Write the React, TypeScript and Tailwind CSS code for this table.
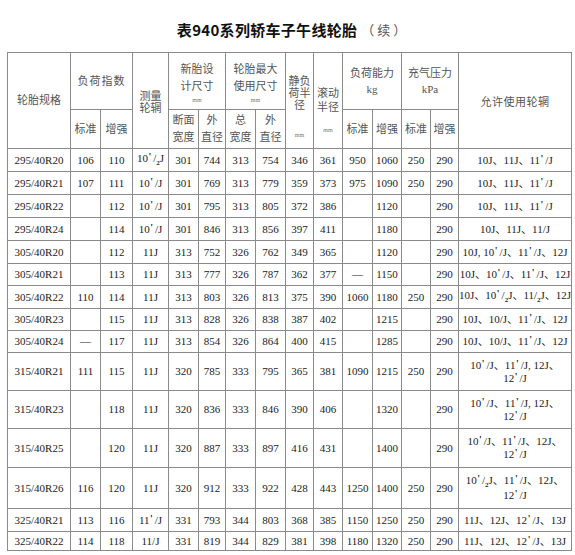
import React from 'react';

const FONT = "font-['Liberation_Serif','Noto_Sans_CJK_SC',serif]";

const colWidths = [63, 30, 32, 36, 30, 27, 30, 30, 28, 29, 30, 29, 29, 28, 113];

type Row = {
  h: number;
  cells: string[];
  rims: string[];
};

const rows: Row[] = [
  { h: 23, cells: ['295/40R20', '106', '110', "10'/_2J", '301', '744', '313', '754', '346', '361', '950', '1060', '250', '290'], rims: ["10J、11J、11'/J"] },
  { h: 23, cells: ['295/40R21', '107', '111', "10'/J", '301', '769', '313', '779', '359', '373', '975', '1090', '250', '290'], rims: ["10J、11J、11'/J"] },
  { h: 23, cells: ['295/40R22', '', '112', "10'/J", '301', '795', '313', '805', '372', '386', '', '1120', '', '290'], rims: ["10J、11J、11'/J"] },
  { h: 23, cells: ['295/40R24', '', '114', "10'/J", '301', '846', '313', '856', '397', '411', '', '1180', '', '290'], rims: ['10J、11J、11/J'] },
  { h: 23, cells: ['305/40R20', '', '112', '11J', '313', '752', '326', '762', '349', '365', '', '1120', '', '290'], rims: ["10J, 10'/J、11'/J、12J"] },
  { h: 22, cells: ['305/40R21', '', '113', '11J', '313', '777', '326', '787', '362', '377', '—', '1150', '', '290'], rims: ["10J、10'/J、11'/J、12J"] },
  { h: 23, cells: ['305/40R22', '110', '114', '11J', '313', '803', '326', '813', '375', '390', '1060', '1180', '250', '290'], rims: ["10J、10'/_2J、11/_2J、12J"] },
  { h: 22, cells: ['305/40R23', '', '115', '11J', '313', '828', '326', '838', '387', '402', '', '1215', '', '290'], rims: ["10J、10/J、11'/J、12J"] },
  { h: 22, cells: ['305/40R24', '—', '117', '11J', '313', '854', '326', '864', '400', '415', '', '1285', '', '290'], rims: ["10J、10/J、11'/J、12J"] },
  { h: 38, cells: ['315/40R21', '111', '115', '11J', '320', '785', '333', '795', '365', '381', '1090', '1215', '250', '290'], rims: ["10'/J、11'/J, 12J、", "12'/J"] },
  { h: 38, cells: ['315/40R23', '', '118', '11J', '320', '836', '333', '846', '390', '406', '', '1320', '', '290'], rims: ["10'/J、11'/J, 12J、", "12'/J"] },
  { h: 39, cells: ['315/40R25', '', '120', '11J', '320', '887', '333', '897', '416', '431', '', '1400', '', '290'], rims: ["10'/J、11'/J、12J、", "12'/J"] },
  { h: 41, cells: ['315/40R26', '116', '120', '11J', '320', '912', '333', '922', '428', '443', '1250', '1400', '250', '290'], rims: ["10'/_2J、11'/J、12J、", "12'/J"] },
  { h: 23, cells: ['325/40R21', '113', '116', "11'/J", '331', '793', '344', '803', '368', '385', '1150', '1250', '250', '290'], rims: ["11J、12J、12'/J、13J"] },
  { h: 19, cells: ['325/40R22', '114', '118', '11/J', '331', '819', '344', '829', '381', '398', '1180', '1320', '250', '290'], rims: ["11J、12J、12'/J、13J"] },
];

// "_2" marks the small bold subscript 2, "'" the heavy prime used in the source
function Rim({ text }: { text: string }) {
  const out: React.ReactNode[] = [];
  let buf = '';
  for (let i = 0; i < text.length; i++) {
    const ch = text[i];
    if (ch === '_' && text[i + 1] === '2') {
      if (buf) out.push(buf);
      buf = '';
      out.push(
        <span key={i} className="text-[7px] font-bold align-sub leading-none">
          2
        </span>
      );
      i++;
    } else if (ch === "'") {
      if (buf) out.push(buf);
      buf = '';
      out.push(
        <span key={i} className="font-bold ml-[0.5px] mr-[2px] text-[10px] relative -top-[2px]">
          '
        </span>
      );
    } else {
      buf += ch;
    }
  }
  if (buf) out.push(buf);
  return <>{out}</>;
}

const cell = 'border border-[#8a8a8a] p-0 text-center align-middle';
const mm = 'block text-[6px] leading-[8px] text-[#777]';

export default function App() {
  return (
    <div className={`w-[575px] h-[555px] bg-white text-[#222] ${FONT}`}>
      <div className="h-[52px] pt-[21px] flex justify-center items-start pl-[8px]">
        <span className="text-[15px] leading-[18px] font-bold text-[#111] tracking-[0.3px] font-['Noto_Sans_CJK_SC',sans-serif]">
          表940系列轿车子午线轮胎
        </span>
        <span className="ml-[4px] text-[13px] leading-[18px] text-[#555] font-['Noto_Sans_CJK_SC',sans-serif] whitespace-pre">
          （ 续 ）
        </span>
      </div>
      <table className="ml-[7px] w-[564px] table-fixed border-collapse border border-[#777] text-[11px]">
        <colgroup>
          {colWidths.map((w, i) => (
            <col key={i} style={{ width: w }} />
          ))}
        </colgroup>
        <thead className="leading-[17px] text-[#555]">
          <tr className="h-[57px]">
            <th rowSpan={2} className={`${cell} font-normal`}>轮胎规格</th>
            <th colSpan={2} className={`${cell} font-normal tracking-[1px]`}>负荷指数</th>
            <th rowSpan={2} className={`${cell} font-normal leading-[12px] pt-[2px]`}>
              测量
              <br />
              轮辋
            </th>
            <th colSpan={2} className={`${cell} font-normal pt-[2px]`}>
              新胎设
              <br />
              计尺寸
              <span className={`${mm} mt-[1px]`}>mm</span>
            </th>
            <th colSpan={2} className={`${cell} font-normal pt-[2px]`}>
              轮胎最大
              <br />
              使用尺寸
              <span className={`${mm} mt-[1px]`}>mm</span>
            </th>
            <th rowSpan={2} className={`${cell} font-normal leading-[12px] pt-[12px]`}>
              静负
              <br />
              荷半
              <br />径
              <span className={`${mm} mt-[20px]`}>mm</span>
            </th>
            <th rowSpan={2} className={`${cell} font-normal leading-[14px] pt-[18px]`}>
              滚动
              <br />
              半径
              <span className={`${mm} mt-[12px]`}>mm</span>
            </th>
            <th colSpan={2} className={`${cell} font-normal leading-[16px]`}>
              负荷能力
              <br />
              kg
            </th>
            <th colSpan={2} className={`${cell} font-normal leading-[16px]`}>
              充气压力
              <br />
              kPa
            </th>
            <th rowSpan={2} className={`${cell} font-normal pt-[4px] tracking-[0.5px]`}>允许使用轮辋</th>
          </tr>
          <tr className="h-[39px]">
            <th className={`${cell} font-normal`}>标准</th>
            <th className={`${cell} font-normal`}>增强</th>
            <th className={`${cell} font-normal`}>
              断面
              <br />
              宽度
            </th>
            <th className={`${cell} font-normal`}>
              外
              <br />
              直径
            </th>
            <th className={`${cell} font-normal`}>
              总
              <br />
              宽度
            </th>
            <th className={`${cell} font-normal`}>
              外
              <br />
              直径
            </th>
            <th className={`${cell} font-normal`}>标准</th>
            <th className={`${cell} font-normal`}>增强</th>
            <th className={`${cell} font-normal`}>标准</th>
            <th className={`${cell} font-normal`}>增强</th>
          </tr>
        </thead>
        <tbody className="leading-[13px]">
          {rows.map((r) => (
            <tr key={r.cells[0]} style={{ height: r.h }}>
              {r.cells.map((c, i) => (
                <td key={i} className={`${cell} whitespace-nowrap`}>
                  <Rim text={c} />
                </td>
              ))}
              <td className={`${cell} whitespace-nowrap`}>
                {r.rims.map((t, i) => (
                  <div key={i}>
                    <Rim text={t} />
                  </div>
                ))}
              </td>
            </tr>
          ))}
        </tbody>
      </table>
    </div>
  );
}
